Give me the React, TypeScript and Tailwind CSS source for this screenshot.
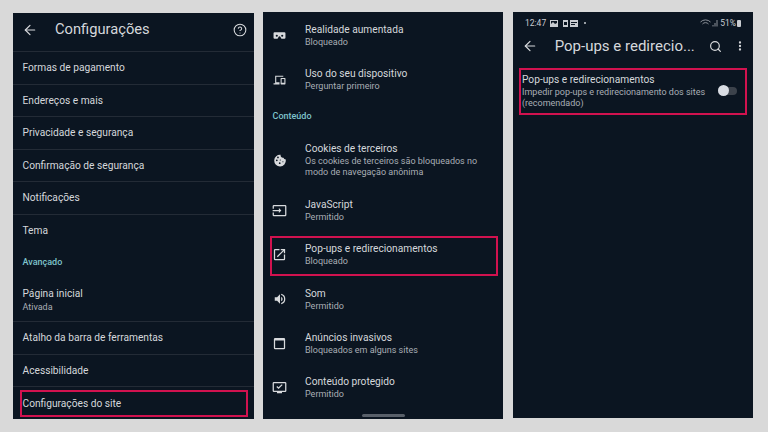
import React from "react";
import { ArrowLeft, Search, EllipsisVertical, CircleHelp } from "lucide-react";

function Row1({ title, sub, h = "h-[32.5px]", border = true }: { title: string; sub?: string; h?: string; border?: boolean }) {
  return (
    <div className={`${h} px-[9.5px] flex flex-col justify-center ${border ? "border-b border-[#232b36]" : ""}`}>
      <div className="text-[10.2px] leading-[13px] text-[#d5d8dc]">{title}</div>
      {sub && <div className="text-[9px] leading-[12px] mt-[1px] text-[#a9aeb5]">{sub}</div>}
    </div>
  );
}

function Row2({ icon, title, subs, h = "h-[44.5px]" }: { icon: React.ReactNode; title: string; subs: string[]; h?: string }) {
  return (
    <div className={`${h} flex items-center`}>
      <div className="w-[42px] pl-[9px] shrink-0 flex items-center">
        <div className="w-[15px] flex justify-center">{icon}</div>
      </div>
      <div className="flex flex-col">
        <div className="text-[10.2px] leading-[13px] text-[#d5d8dc] mb-[1px]">{title}</div>
        {subs.map((s) => (
          <div key={s} className="text-[9px] leading-[11px] text-[#a9aeb5]">{s}</div>
        ))}
      </div>
    </div>
  );
}

const Ic = ({ children, size = 15 }: { children: React.ReactNode; size?: number }) => (
  <svg width={size} height={size} viewBox="0 0 24 24" fill="#d8dadd">{children}</svg>
);

export default function App() {
  return (
    <div className="relative w-[768px] h-[432px] overflow-hidden bg-[#d9d9d9] flex gap-[9px] pl-[13px] pt-[13px] font-['Roboto',sans-serif]">
      {/* Panel 1 */}
      <div className="relative w-[241px] h-[406px] bg-[#0b1521] shrink-0">
        <div className="h-[39px] pb-[5px] flex items-center pl-[8.7px] pr-[7px] border-b border-[#232b36]">
          <ArrowLeft size={16} color="#d8dadd" strokeWidth={1.8} />
          <div className="ml-[17.3px] text-[14.7px] text-[#d5d8dc] flex-1">Configurações</div>
          <CircleHelp size={14} color="#d8dadd" strokeWidth={1.8} />
        </div>
        <Row1 title="Formas de pagamento" />
        <Row1 title="Endereços e mais" />
        <Row1 title="Privacidade e segurança" />
        <Row1 title="Confirmação de segurança" />
        <Row1 title="Notificações" />
        <Row1 title="Tema" border={false} />
        <div className="h-[31.5px] px-[9.5px] flex items-center text-[9px] font-medium text-[#7fc4cc]">Avançado</div>
        <Row1 title="Página inicial" sub="Ativada" h="h-[43.5px]" />
        <Row1 title="Atalho da barra de ferramentas" />
        <Row1 title="Acessibilidade" />
        <Row1 title="Configurações do site" border={false} />
        <div className="absolute left-[7px] top-[377px] w-[228px] h-[27px] border-2 border-[#d1124f]" />
      </div>

      {/* Panel 2 */}
      <div className="relative w-[240px] h-[407px] -mt-[1px] pt-[1px] bg-[#0b1521] shrink-0">
        <Row2 title="Realidade aumentada" subs={["Bloqueado"]} icon={
          <Ic size={13}><path d="M3 6h18a2 2 0 0 1 2 2v8a2 2 0 0 1-2 2h-4.2a2 2 0 0 1-1.8-1.1l-1.2-2.3a2 2 0 0 0-3.6 0L9 16.9A2 2 0 0 1 7.2 18H3a2 2 0 0 1-2-2V8a2 2 0 0 1 2-2Zm4 4.5a2 2 0 1 0 0 4 2 2 0 0 0 0-4Zm10 0a2 2 0 1 0 0 4 2 2 0 0 0 0-4Z" fillRule="evenodd" /></Ic>
        } />
        <Row2 title="Uso do seu dispositivo" subs={["Perguntar primeiro"]} icon={
          <Ic size={13}><path d="M4 5h15v2H6v10h6v4H1v-2h3V5Zm11 4h7a1 1 0 0 1 1 1v10a1 1 0 0 1-1 1h-7a1 1 0 0 1-1-1V10a1 1 0 0 1 1-1Zm1 2v7h5v-7h-5Z" fillRule="evenodd" /></Ic>
        } />
        <div className="h-[30px] pl-[9.5px] flex items-center text-[9px] font-medium text-[#7fc4cc]">Conteúdo</div>
        <Row2 title="Cookies de terceiros" subs={["Os cookies de terceiros são bloqueados no", "modo de navegação anônima"]} h="h-[56px]" icon={
          <Ic size={14}><path d="M21.9 11.1A4 4 0 0 1 18 8a4 4 0 0 1-4.9-5A10 10 0 1 0 22 12c0-.3 0-.6-.1-.9ZM8.5 9a1.5 1.5 0 1 1 0-3 1.5 1.5 0 0 1 0 3Zm-2 5a1.5 1.5 0 1 1 0-3 1.5 1.5 0 0 1 0 3Zm5 5a1.5 1.5 0 1 1 0-3 1.5 1.5 0 0 1 0 3Zm1-6a1 1 0 1 1 0-2 1 1 0 0 1 0 2Zm4.5 3a1 1 0 1 1 0-2 1 1 0 0 1 0 2Z" fillRule="evenodd" /></Ic>
        } />
        <Row2 title="JavaScript" subs={["Permitido"]} icon={
          <Ic><path d="M21 3H3a2 2 0 0 0-2 2v4h2V5h18v14H3v-4H1v4a2 2 0 0 0 2 2h18a2 2 0 0 0 2-2V5a2 2 0 0 0-2-2ZM11 16l4-4-4-4v3H1v2h10v3Z" /></Ic>
        } />
        <Row2 title="Pop-ups e redirecionamentos" subs={["Bloqueado"]} icon={
          <Ic><path d="M19 19H5V5h7V3H5a2 2 0 0 0-2 2v14a2 2 0 0 0 2 2h14a2 2 0 0 0 2-2v-7h-2v7ZM14 3v2h3.6l-9.8 9.8 1.4 1.4L19 6.4V10h2V3h-7Z" /></Ic>
        } />
        <Row2 title="Som" subs={["Permitido"]} icon={
          <Ic size={14}><path d="M3 9v6h4l5 5V4L7 9H3Zm13.5 3A4.5 4.5 0 0 0 14 8v8a4.5 4.5 0 0 0 2.5-4ZM14 3.2v2.1a7 7 0 0 1 0 13.4v2.1a9 9 0 0 0 0-17.6Z" /></Ic>
        } />
        <Row2 title="Anúncios invasivos" subs={["Bloqueados em alguns sites"]} icon={
          <Ic><path d="M19 3H5a2 2 0 0 0-2 2v14a2 2 0 0 0 2 2h14a2 2 0 0 0 2-2V5a2 2 0 0 0-2-2Zm0 16H5V7h14v12Z" /></Ic>
        } />
        <Row2 title="Conteúdo protegido" subs={["Permitido"]} h="h-[42px]" icon={
          <Ic><path d="M21 3H3a2 2 0 0 0-2 2v12a2 2 0 0 0 2 2h5v2h8v-2h5a2 2 0 0 0 2-2V5a2 2 0 0 0-2-2Zm0 14H3V5h18v12Zm-4-9-1.4-1.4-5.1 5.1-2.1-2.1L7 11l3.5 3.5L17 8Z" /></Ic>
        } />
        <div className="absolute left-[7px] top-[224px] w-[228px] h-[40px] border-2 border-[#d1124f]" />
        <div className="absolute left-[99px] top-[402px] w-[43px] h-[2.5px] bg-[#59606a] rounded-full" />
      </div>

      {/* Panel 3 */}
      <div className="relative w-[240px] h-[406px] -mt-[1px] ml-[1px] bg-[#0b1521] shrink-0">
        <div className="h-[22px] flex items-center pl-[12px] pr-[12px] text-[8.5px] text-[#c9ccd1]">
          <span>12:47</span>
          <svg className="ml-[4px]" width="28" height="7" viewBox="0 0 28 7" fill="#c9ccd1">
            <path fillRule="evenodd" d="M0 0h8v7H0ZM1 1v3l2-2 2 2 2-1V1Z" />
            <path fillRule="evenodd" d="M13 0h5v7h-5ZM14 2v3h3V2Z" />
            <path fillRule="evenodd" d="M20 0h8v7h-8ZM21 2v1h6V2ZM21 4v1h4V4Z" />
          </svg>
          <span className="ml-[6px] w-[2px] h-[2px] rounded-full bg-[#c9ccd1]" />
          <div className="flex-1" />
          <svg width="18" height="8" viewBox="0 0 18 8" fill="none" stroke="#8d929a" strokeWidth="1">
            <path d="M0.5 3a7 7 0 0 1 10 0M2.5 5a4 4 0 0 1 6 0" />
            <path d="M13 7.5V6M15 7.5V4M17 7.5V1" />
          </svg>
          <span className="ml-[2px]">51%</span>
          <span className="ml-[1px] w-[4px] h-[7px] bg-[#c9ccd1] rounded-[1px]" />
        </div>
        <div className="h-[24px] flex items-center pl-[8.7px] pr-[7px]">
          <ArrowLeft size={16} color="#d8dadd" strokeWidth={1.8} />
          <div className="ml-[17px] text-[15px] text-[#d5d8dc] flex-1">Pop-ups e redirecio...</div>
          <Search size={13} color="#d8dadd" strokeWidth={2.2} />
          <EllipsisVertical size={12} color="#d8dadd" strokeWidth={2.6} className="ml-[12px]" />
        </div>
        <div className="mt-[11px] h-[43px] pl-[9px] pr-[16px] flex items-center justify-between">
          <div>
            <div className="text-[10.2px] leading-[13px] text-[#d5d8dc] mb-[1px]">Pop-ups e redirecionamentos</div>
            <div className="text-[9px] leading-[11px] text-[#a9aeb5] w-[190px]">Impedir pop-ups e redirecionamento dos sites (recomendado)</div>
          </div>
          <div className="relative w-[19px] h-[8px] rounded-full bg-[#3c424b]">
            <div className="absolute left-0 top-[-1.5px] w-[11px] h-[11px] rounded-full bg-[#d9dce3]" />
          </div>
        </div>
        <div className="absolute left-[6px] top-[56px] w-[228px] h-[47px] border-2 border-[#d1124f]" />
      </div>
    </div>
  );
}
